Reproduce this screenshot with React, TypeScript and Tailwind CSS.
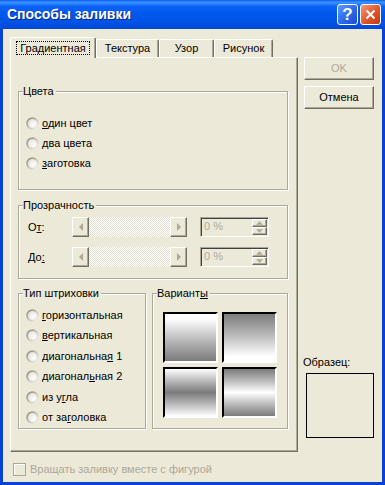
import React from "react";

const face = "bg-[#ece9d8]";

function Radio() {
  return (
    <svg width="13" height="13" viewBox="0 0 13 13" className="shrink-0">
      <defs>
        <linearGradient id="rring" x1="0" y1="0" x2="1" y2="1">
          <stop offset="0" stopColor="#7f7d70" />
          <stop offset="0.55" stopColor="#c9c6b6" />
          <stop offset="1" stopColor="#ffffff" />
        </linearGradient>
        <radialGradient id="rfill" cx="0.65" cy="0.65" r="0.7">
          <stop offset="0" stopColor="#ffffff" />
          <stop offset="1" stopColor="#e4e2d8" />
        </radialGradient>
      </defs>
      <circle cx="6.5" cy="6.5" r="6.2" fill="url(#rring)" />
      <circle cx="6.5" cy="6.5" r="4.6" fill="url(#rfill)" />
    </svg>
  );
}

function RadioRow({ children, h = "h-5" }: { children: React.ReactNode; h?: string }) {
  return (
    <div className={`flex items-center gap-[3px] pl-[7px] ${h}`}>
      <Radio />
      <span className="leading-[13px]">{children}</span>
    </div>
  );
}

function Group({
  label,
  className = "",
  children,
}: {
  label: React.ReactNode;
  className?: string;
  children?: React.ReactNode;
}) {
  return (
    <div
      className={`relative border border-[#aca899] shadow-[inset_1px_1px_0_#fff,1px_1px_0_#fff] ${className}`}
    >
      <span className={`absolute -top-[7px] left-[4px] ${face} pr-[2px] leading-[13px]`}>{label}</span>
      {children}
    </div>
  );
}

function Arrow({ dir }: { dir: "left" | "right" | "up" | "down" }) {
  const pts = {
    left: "4,0 4,8 0,4",
    right: "0,0 0,8 4,4",
    up: "0,4 8,4 4,0",
    down: "0,0 8,0 4,4",
  }[dir];
  const vertical = dir === "up" || dir === "down";
  return (
    <svg width={vertical ? 7 : 4} height={vertical ? 4 : 8} viewBox={vertical ? "0 0 8 4" : "0 0 4 8"}>
      <polygon points={pts} fill="#aca899" />
    </svg>
  );
}

function RaisedBtn({ className = "", children }: { className?: string; children?: React.ReactNode }) {
  return (
    <div
      className={`flex items-center justify-center ${face} border border-t-white border-l-white border-r-[#716f64] border-b-[#716f64] shadow-[inset_-1px_-1px_0_#aca899] ${className}`}
    >
      {children}
    </div>
  );
}

function Slider() {
  return (
    <div className="flex w-[115px] h-[20px]">
      <RaisedBtn className="w-[17px]">
        <Arrow dir="left" />
      </RaisedBtn>
      <div className="flex-1 bg-[repeating-conic-gradient(#ffffff_0_25%,#e2dfce_0_50%)] bg-[length:2px_2px]" />
      <RaisedBtn className="w-[17px]">
        <Arrow dir="right" />
      </RaisedBtn>
    </div>
  );
}

function Spin() {
  return (
    <div className="flex w-[69px] h-[20px] ml-[13px] border border-t-[#aca899] border-l-[#aca899] border-r-white border-b-white shadow-[inset_1px_1px_0_#404040]">
      <span className="flex-1 pl-[3px] pt-[2px] text-[#aca899] leading-[13px]">0 %</span>
      <div className="flex flex-col w-[16px] py-px pr-px">
        <RaisedBtn className="h-[9px] w-full">
          <Arrow dir="up" />
        </RaisedBtn>
        <RaisedBtn className="h-[9px] w-full">
          <Arrow dir="down" />
        </RaisedBtn>
      </div>
    </div>
  );
}

function Swatch({ grad }: { grad: string }) {
  return (
    <div className="w-[55px] h-[51px] border-2 border-t-[#000] border-l-[#000] border-r-[#fff] border-b-[#fff]">
      <div className={`w-full h-full ${grad}`} />
    </div>
  );
}

function Tab({ w, selected, children }: { w: string; selected?: boolean; children: React.ReactNode }) {
  return (
    <div
      className={`${w} ${
        selected ? "h-[21px] -mb-px z-10" : "h-[18px]"
      } relative flex items-center justify-center ${face} rounded-t-[2px] border-t border-l border-r border-t-white border-l-white border-r-[#716f64] shadow-[inset_-1px_0_0_#aca899]`}
    >
      {selected ? (
        <span className="border border-dotted border-black px-[3px] h-[14px] leading-[12px] -mt-[1px]">{children}</span>
      ) : (
        <span className="leading-[13px]">{children}</span>
      )}
    </div>
  );
}

export default function App() {
  return (
    <div className="flex flex-col w-[385px] h-[485px] bg-[#0842d4] font-['Liberation_Sans',Arial,sans-serif] text-[11px] text-black">
      {/* title bar */}
      <div className="flex items-center h-[29px] pl-[7px] pr-[4px] bg-[linear-gradient(to_bottom,#0a5ff2_0%,#3d93ff_8%,#0b63f6_22%,#0058ee_45%,#0054e6_75%,#0049d8_100%)]">
        <span className="flex-1 text-white font-bold text-[14px] [text-shadow:1px_1px_0_#0a2a8c]">
          Способы заливки
        </span>
        <div className="flex gap-[2px]">
          <div className="w-[21px] h-[21px] rounded-[3px] border border-white bg-[linear-gradient(135deg,#5c9bff,#2863e8_60%,#1c4fd2)] flex items-center justify-center text-white font-bold text-[17px] leading-none">
            ?
          </div>
          <div className="w-[21px] h-[21px] rounded-[3px] border border-white bg-[linear-gradient(135deg,#f0997a,#e0552b_55%,#c3390f)] flex items-center justify-center">
            <svg width="11" height="11" viewBox="0 0 11 11">
              <path d="M1.5 1.5 L9.5 9.5 M9.5 1.5 L1.5 9.5" stroke="#fff" strokeWidth="2" />
            </svg>
          </div>
        </div>
      </div>

      {/* client area */}
      <div className={`flex-1 mx-[3px] mb-[3px] ${face} pl-[7px] pt-[8px]`}>
        <div className="flex">
          <div className="w-[288px]">
            <div className="flex items-end h-[20px]">
              <Tab w="w-[86px]" selected>
                Градиентная
              </Tab>
              <Tab w="w-[63px]">Текстура</Tab>
              <Tab w="w-[55px]">Узор</Tab>
              <Tab w="w-[59px]">Рисунок</Tab>
            </div>
            <div className="h-[395px] border border-t-white border-l-white border-r-[#716f64] border-b-[#716f64] shadow-[inset_-1px_-1px_0_#aca899] pl-[7px] pt-[33px]">
              <Group label="Цвета" className="w-[270px] h-[99px] pt-[21px]">
                <RadioRow>
                  <span className="underline">о</span>дин цвет
                </RadioRow>
                <RadioRow>
                  <span className="underline">д</span>ва цвета
                </RadioRow>
                <RadioRow>
                  <span className="underline">з</span>аготовка
                </RadioRow>
              </Group>

              <Group label="Прозрачность" className="w-[270px] h-[74px] mt-[15px] pt-[11px]">
                <div className="flex items-center h-[20px]">
                  <span className="w-[53px] pl-[9px]">
                    О<span className="underline">т</span>:
                  </span>
                  <Slider />
                  <Spin />
                </div>
                <div className="flex items-center h-[20px] mt-[10px]">
                  <span className="w-[53px] pl-[9px]">
                    До<span className="underline">:</span>
                  </span>
                  <Slider />
                  <Spin />
                </div>
              </Group>

              <div className="flex mt-[14px] h-[136px]">
                <Group label="Тип штриховки" className="w-[128px] h-full pt-[11px]">
                  <RadioRow h="h-[20.5px]">
                    <span className="underline">г</span>оризонтальная
                  </RadioRow>
                  <RadioRow h="h-[20.5px]">
                    <span className="underline">в</span>ертикальная
                  </RadioRow>
                  <RadioRow h="h-[20.5px]">
                    диагональна<span className="underline">я</span> 1
                  </RadioRow>
                  <RadioRow h="h-[20.5px]">
                    диагонал<span className="underline">ь</span>ная 2
                  </RadioRow>
                  <RadioRow h="h-[20.5px]">
                    из у<span className="underline">г</span>ла
                  </RadioRow>
                  <RadioRow h="h-[20.5px]">
                    от за<span className="underline">г</span>оловка
                  </RadioRow>
                </Group>
                <Group
                  label={
                    <>
                      Вариант<span className="underline">ы</span>
                    </>
                  }
                  className="w-[136px] h-full ml-[6px] pl-[10px] pt-[18px]"
                >
                  <div className="grid grid-cols-[55px_55px] gap-[4px]">
                    <Swatch grad="bg-linear-to-b from-white from-[10%] to-[#7b7b7b]" />
                    <Swatch grad="bg-linear-to-b from-[#7b7b7b] to-white to-[90%]" />
                    <Swatch grad="bg-linear-to-b from-white via-[#7b7b7b] to-white" />
                    <Swatch grad="bg-linear-to-b from-[#7b7b7b] via-white to-[#7b7b7b]" />
                  </div>
                </Group>
              </div>
            </div>
          </div>

          {/* right column */}
          <div className="ml-[6px] w-[70px] pt-[20px] flex flex-col">
            <RaisedBtn className="h-[23px] text-[#aca899]">OK</RaisedBtn>
            <RaisedBtn className="h-[23px] mt-[6px]">Отмена</RaisedBtn>
            <span className="mt-[247px] -ml-[1px] leading-[13px]">Образец:</span>
            <div className="mt-[4px] ml-[2px] w-[68px] h-[65px] border border-black" />
          </div>
        </div>

        {/* bottom checkbox */}
        <div className="flex items-center mt-[9px] ml-[3px] gap-[4px]">
          <div className="w-[13px] h-[13px] border border-[#aca899] shadow-[inset_1px_1px_0_#fff]" />
          <span className="text-[#aca899] text-[11px]">Вращать заливку вместе с фигурой</span>
        </div>
      </div>
    </div>
  );
}
